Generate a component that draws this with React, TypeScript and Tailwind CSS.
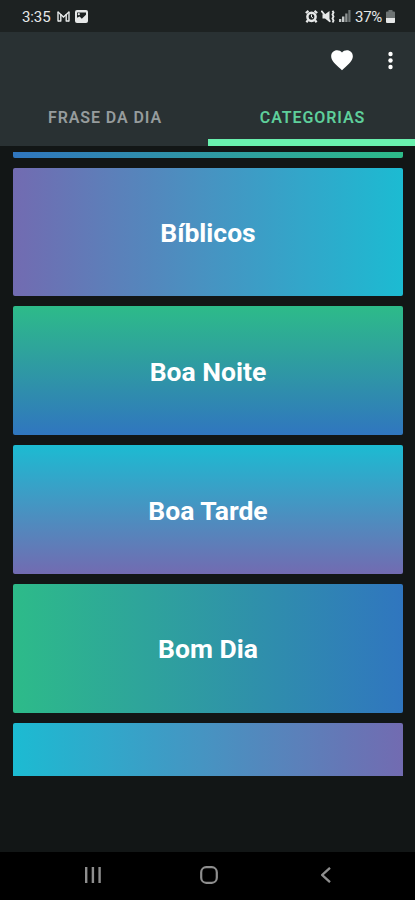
import { useState } from 'react';
import clsx from 'clsx';

type Category = { name: string; gradient: string };

const categories: Category[] = [
  { name: 'Bíblicos', gradient: 'bg-linear-to-r/srgb from-[#726bb1] to-[#1cbbd2]' },
  { name: 'Boa Noite', gradient: 'bg-linear-to-b/srgb from-[#2dbb89] to-[#3076bf]' },
  { name: 'Boa Tarde', gradient: 'bg-linear-to-b/srgb from-[#1cbbd2] to-[#726bb1]' },
  { name: 'Bom Dia', gradient: 'bg-linear-to-r/srgb from-[#2dbb89] to-[#3076bf]' },
];

const tabs = ['FRASE DA DIA', 'CATEGORIAS'];

function StatusBar() {
  return (
    <div className="flex h-8 shrink-0 items-center justify-between bg-[#1d2222] pl-[22px] pr-5 text-[#e6e8e8]">
      <div className="flex items-center">
        <span className="w-[35px] pt-[3px] text-[15px] leading-none tracking-[-0.1px]">3:35</span>
        {/* Mail */}
        <svg className="h-[11px] w-[13px]" viewBox="0 0 13 11" fill="none" stroke="currentColor">
          <path d="M1 .5v10M12 .5v10M3.8 3v7.5M9.2 3v7.5" strokeWidth="1.4" />
          <path d="M1 1l5.5 5L12 1M1 10h2.8M9.2 10H12" strokeWidth="1.4" />
        </svg>
        {/* Picture */}
        <svg className="ml-[5px] h-[13px] w-[13px]" viewBox="0 0 13 13">
          <rect width="13" height="13" rx="2" fill="currentColor" />
          <path d="M2 7.8V2.5h9v2.3L6.8 8.8 4.6 6.6z" fill="#1d2222" />
          <circle cx="3.8" cy="4.2" r="1.1" fill="currentColor" />
        </svg>
      </div>
      <div className="flex items-center">
        {/* Alarm */}
        <svg className="h-[13px] w-[13px]" viewBox="0 0 13 13" fill="none" stroke="currentColor">
          <circle cx="6.5" cy="6.8" r="4.1" strokeWidth="2.5" />
          <path d="M.8 3L3.5.9M12.2 3L9.5.9M3 10.3l-1.6 2M10 10.3l1.6 2" strokeWidth="2.2" />
          <path d="M6.5 4.5V7l1.6 1" strokeWidth="1" />
        </svg>
        {/* Vibrate / muted speaker */}
        <svg className="ml-[3px] h-[13px] w-[14px]" viewBox="0 0 14 13">
          <path d="M1.5 4.2h2.5L8.5 1v11L4 8.6H1.5z" fill="currentColor" />
          <path d="M.3.8l9 11" stroke="currentColor" strokeWidth="1.8" />
          <path
            d="M11.5.8l1 1.7-1 2 1 2-1 2 1 2-.8 2"
            fill="none"
            stroke="currentColor"
            strokeWidth="1.9"
          />
        </svg>
        {/* Signal */}
        <svg className="ml-1 h-3 w-[12px]" viewBox="0 0 12 12">
          <path d="M0 9h2.3v3H0zM3 6.5h2.4V12H3z" fill="#c4c8c8" />
          <path d="M6.2 3.5h2.3V12H6.2z" fill="#8e9393" />
          <path d="M9.3 0h2.2v12H9.3z" fill="#6e7474" />
        </svg>
        <span className="ml-1 w-[31px] pt-[3px] text-[15px] leading-none tracking-[-0.3px]">37%</span>
        {/* Battery */}
        <svg className="h-[13px] w-[9px]" viewBox="0 0 9 13">
          <path d="M2.5 0h4v1.5H8a1 1 0 011 1V8H0V2.5a1 1 0 011-1h1.5z" fill="#6e7474" />
          <path d="M0 8h9v4a1 1 0 01-1 1H1a1 1 0 01-1-1z" fill="currentColor" />
        </svg>
      </div>
    </div>
  );
}

function NavBar() {
  return (
    <div className="flex h-12 shrink-0 items-center bg-black pb-0.5 pl-[85px] pr-[84px] text-[#8e8e8e]">
      <div className="flex w-full items-center justify-between">
        <svg className="h-4 w-4" viewBox="0 0 16 16">
          <path d="M0 0h2.4v16H0zM6.7 0h2.4v16H6.7zM13.4 0h2.4v16h-2.4z" fill="currentColor" />
        </svg>
        <svg className="mr-[5px] h-[18px] w-[18px]" viewBox="0 0 18 18" fill="none">
          <rect x="1.2" y="1.2" width="15.6" height="15.6" rx="5" stroke="currentColor" strokeWidth="2.2" />
        </svg>
        <svg className="h-4 w-[10px]" viewBox="0 0 10 16" fill="none">
          <path d="M9 .8L1.2 8 9 15.2" stroke="currentColor" strokeWidth="2.3" />
        </svg>
      </div>
    </div>
  );
}

export default function App() {
  const [active, setActive] = useState(1);

  return (
    <div className="flex h-[900px] w-[415px] flex-col overflow-hidden bg-[#121616] font-['Roboto',sans-serif]">
      <StatusBar />

      <header className="flex h-[114px] shrink-0 flex-col bg-[#293133]">
        <div className="flex h-14 items-center justify-end pr-[22px] text-white">
          <button aria-label="Favoritos">
            <svg className="h-[26px] w-[26px]" viewBox="0 0 24 24" fill="currentColor">
              <path d="M12 21.35l-1.45-1.32C5.4 15.36 2 12.28 2 8.5 2 5.42 4.42 3 7.5 3c1.74 0 3.41.81 4.5 2.09C13.09 3.81 14.76 3 16.5 3 19.58 3 22 5.42 22 8.5c0 3.78-3.4 6.86-8.55 11.54z" />
            </svg>
          </button>
          <button aria-label="Mais" className="ml-[33px]">
            <svg className="h-[19px] w-[5px]" viewBox="0 0 5 19" fill="currentColor">
              <circle cx="2.5" cy="3" r="2.2" />
              <circle cx="2.5" cy="9.5" r="2.2" />
              <circle cx="2.5" cy="16" r="2.2" />
            </svg>
          </button>
        </div>
        <div className="grid flex-1 grid-cols-[208px_207px]">
          {tabs.map((tab, i) => (
            <button
              key={tab}
              onClick={() => setActive(i)}
              className={clsx(
                'border-b-[7px] pl-0.5 pt-[9px] text-[16px] font-semibold tracking-[0.9px]',
                active === i ? 'border-[#69f0ae] text-[#5ecf9b]' : 'border-transparent text-[#969c9d]'
              )}
            >
              {tab}
            </button>
          ))}
        </div>
      </header>

      <main className="flex flex-1 flex-col gap-[10px] pl-[13px] pr-3 pt-[5.5px]">
        {/* Card scrolled under the tabs */}
        <div className="h-[6px] shrink-0 rounded-b-xs bg-linear-to-r/srgb from-[#3076bf] to-[#2dbb89]" />
        {categories.map((category) => (
          <div
            key={category.name}
            className={clsx(
              'flex h-[128.8px] shrink-0 items-center justify-center rounded-xs pt-0.5 text-[26.5px] font-bold text-white',
              category.gradient
            )}
          >
            {category.name}
          </div>
        ))}
        <div className="h-[53px] shrink-0 rounded-t-xs bg-linear-to-r/srgb from-[#1cbbd2] to-[#726bb1]" />
      </main>

      <NavBar />
    </div>
  );
}
